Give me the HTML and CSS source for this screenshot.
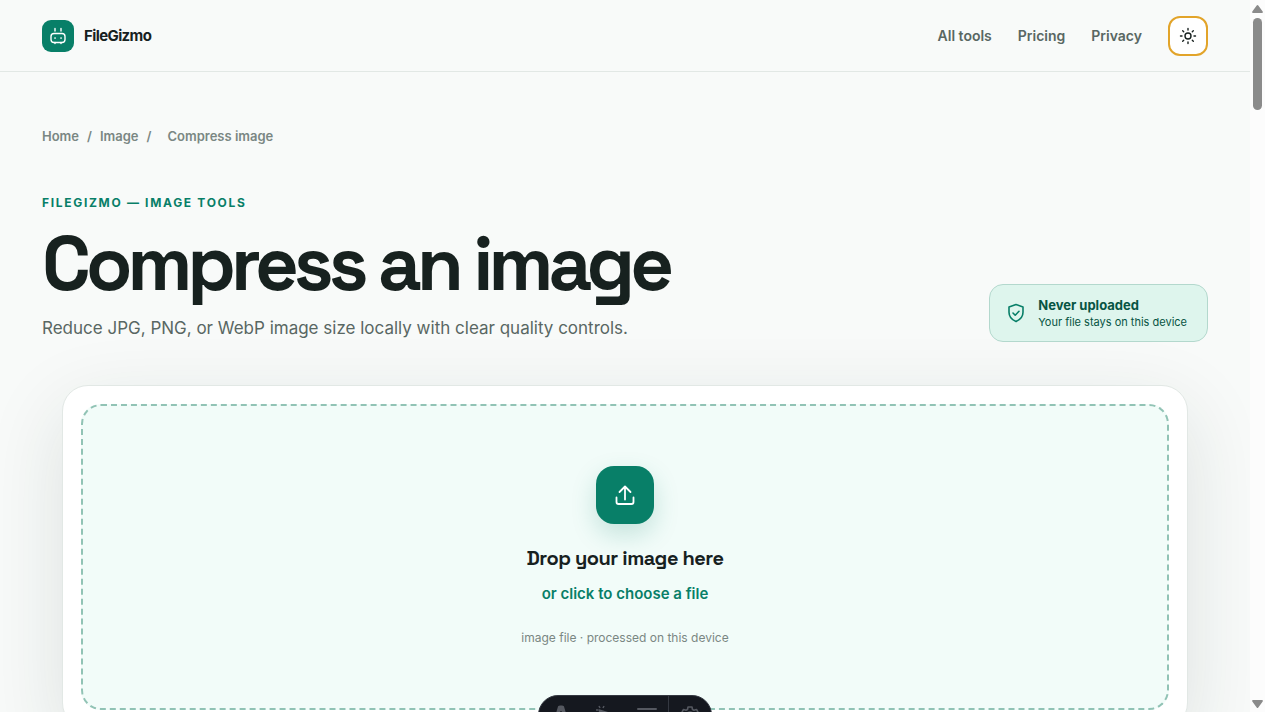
FILE: index.html
```
<!DOCTYPE html>
<html lang="en">
<head>
  <meta charset="utf-8">
  <meta name="viewport" content="width=device-width, initial-scale=1">
  <title>Compress an image - FileGizmo</title>
  <link rel="stylesheet" href="styles.css">
</head>
<body>
  <div class="page">
    <header class="site-header">
      <a class="brand" href="#">
        <span class="brand-mark">
          <svg width="20" height="20" viewBox="0 0 20 20" fill="none" stroke="currentColor" stroke-width="1.4" stroke-linecap="round">
            <path d="M7 2.500v2.500M13 2.500v2.500M7 16.500v1M13 16.500v1"/>
            <rect x="3" y="7.500" width="14" height="9" rx="3"/>
            <path stroke-width="1.700" d="M7 12h.1M13 12h.1"/>
          </svg>
        </span>
        FileGizmo
      </a>
      <nav class="main-nav">
        <a href="#">All tools</a>
        <a href="#">Pricing</a>
        <a href="#">Privacy</a>
        <button class="theme-button" type="button" aria-label="Switch theme">
          <svg width="18" height="18" viewBox="0 0 18 18" fill="none" stroke="currentColor" stroke-width="1.4" stroke-linecap="round">
            <circle cx="9" cy="9" r="3"/>
            <path d="M9 1.5v1.500M9 15v1.500M1.5 9h1.500M15 9h1.500M3.7 3.7l1 1M13.3 13.3l1 1M3.7 14.3l1-1M13.3 4.7l1-1"/>
          </svg>
        </button>
      </nav>
    </header>

    <main class="content">
      <nav class="breadcrumbs" aria-label="Breadcrumb">
        <a href="#">Home</a>
        <span>/</span>
        <a href="#">Image</a>
        <span>/</span>
        <span class="current">Compress image</span>
      </nav>

      <div class="intro">
        <div>
          <p class="eyebrow">FILEGIZMO — IMAGE TOOLS</p>
          <h1>Compress an image</h1>
          <p class="lead">Reduce JPG, PNG, or WebP image size locally with clear quality controls.</p>
        </div>
        <div class="privacy-note">
          <svg width="20" height="20" viewBox="0 0 20 20" fill="none" stroke="currentColor" stroke-width="1.6" stroke-linecap="round" stroke-linejoin="round">
            <path d="M10 1.500l7 2.600v5.200c0 4.400-2.800 7.500-7 9.200-4.200-1.700-7-4.800-7-9.200V4.100z"/>
            <path d="M7 10l2.200 2.200L13 8.300"/>
          </svg>
          <div>
            <strong>Never uploaded</strong>
            <span>Your file stays on this device</span>
          </div>
        </div>
      </div>

      <section class="panel">
        <button class="dropzone" type="button">
          <span class="upload-icon">
            <svg width="24" height="24" viewBox="0 0 24 24" fill="none" stroke="currentColor" stroke-width="1.8" stroke-linecap="round" stroke-linejoin="round">
              <path d="M12 16.500V3.500M6.500 9L12 3.500 17.500 9"/>
              <path d="M3.500 14.500V19a2 2 0 0 0 2 2h13a2 2 0 0 0 2-2v-4.500"/>
            </svg>
          </span>
          <span class="drop-title">Drop your image here</span>
          <span class="drop-action">or click to choose a file</span>
          <span class="drop-hint">image file · processed on this device</span>
        </button>
      </section>
    </main>

    <div class="dev-toolbar">
      <button type="button" aria-label="Menu">
        <svg width="20" height="20" viewBox="0 0 20 20" fill="currentColor"><path d="M7 1.500C7.500 .3 12.500 .3 13 1.500L17 15c-2-1-3-1.500-4-1.500L10.500 6h-1L7 13.500c-1 0-2 .5-4 1.500z"/></svg>
      </button>
      <button type="button" aria-label="Inspect">
        <svg width="20" height="20" viewBox="0 0 20 20" fill="none" stroke="currentColor" stroke-width="1.5" stroke-linejoin="round"><path d="M5 5l13 4-6 2-2 6zM2 5h2M5 1l1 2M10 1L9 3M1 9l3-1"/></svg>
      </button>
      <button type="button" aria-label="Audit">
        <svg width="20" height="20" viewBox="0 0 20 20" fill="none" stroke="currentColor" stroke-width="2" stroke-linecap="round"><path d="M1 4h18M1 10h18M1 16h18"/></svg>
      </button>
      <button class="settings" type="button" aria-label="Settings">
        <svg width="20" height="20" viewBox="0 0 20 20" fill="none" stroke="currentColor" stroke-width="1.6" stroke-linejoin="round"><path d="M8 2h4l.5 2.500 1.500.8L16.500 4.500l2 3.500-2 2 2 2-2 3.500-2.500-.8-1.500.8L12 18H8l-.5-2.500-1.500-.8-2.500.8-2-3.500 2-2-2-2 2-3.500 2.500.8 1.500-.8z"/><circle cx="10" cy="10" r="3"/></svg>
      </button>
    </div>
  </div>

  <div class="scrollbar" aria-hidden="true">
    <svg width="11" height="8" viewBox="0 0 11 8" fill="currentColor"><path d="M5.500 0q.5 0 .8.500L10.700 6.500q.6 1.500-.7 1.500H1Q-.3 8 .3 6.500L4.700.5Q5 0 5.500 0z"/></svg>
    <div class="track"><div class="thumb"></div></div>
    <svg width="11" height="8" viewBox="0 0 11 8" fill="currentColor"><path d="M5.500 8q.5 0 .8-.5L10.700 1.500Q11.300 0 10 0H1Q-.3 0 .3 1.500L4.700 7.500Q5 8 5.500 8z"/></svg>
  </div>
</body>
</html>
```
FILE: styles.css
```
* {
  box-sizing: border-box;
}

body {
  margin: 0;
  display: flex;
  height: 100vh;
  overflow: hidden;
  background: #f8faf9;
  color: #17211f;
  font-family: Inter, "Liberation Sans", sans-serif;
}

a {
  color: inherit;
  text-decoration: none;
}

button {
  font: inherit;
  cursor: pointer;
}

.page {
  position: relative;
  flex: 1;
  min-width: 0;
  overflow: hidden;
}

.site-header {
  display: flex;
  justify-content: space-between;
  align-items: center;
  height: 72px;
  padding: 0 42px;
  border-bottom: 1px solid #e2e8e5;
}

.brand {
  display: flex;
  align-items: center;
  gap: 10px;
  font-size: 15px;
  font-weight: 700;
  letter-spacing: -0.04em;
}

.brand-mark {
  display: flex;
  align-items: center;
  justify-content: center;
  width: 32px;
  height: 32px;
  border-radius: 9px;
  background: #087f68;
  color: #fff;
}

.main-nav {
  display: flex;
  align-items: center;
  gap: 26px;
  color: #596763;
  font-size: 14px;
  font-weight: 600;
}

.theme-button {
  display: flex;
  align-items: center;
  justify-content: center;
  width: 40px;
  height: 40px;
  padding: 0;
  border: 2px solid #e2a42a;
  border-radius: 12px;
  background: #fff;
  color: #17211f;
}

.content {
  padding: 54px 42px;
}

.breadcrumbs {
  display: flex;
  gap: 8px;
  color: #7a8783;
  font-size: 13px;
  font-weight: 600;
  line-height: 20px;
}

.current {
  margin-left: 8px;
}

.intro {
  display: flex;
  justify-content: space-between;
  align-items: flex-end;
  margin-top: 48px;
}

.eyebrow {
  margin: 0;
  color: #087f68;
  font-size: 12px;
  font-weight: 700;
  letter-spacing: 0.14em;
  line-height: 18px;
}

h1 {
  margin: 14px 0 12px;
  font-family: "Space Grotesk", Inter, sans-serif;
  font-size: 76px;
  font-weight: 700;
  letter-spacing: -0.065em;
  line-height: 76px;
}

.lead {
  margin: 0;
  color: #596763;
  font-size: 17px;
  line-height: 28px;
}

.privacy-note {
  display: flex;
  align-items: center;
  gap: 12px;
  height: 58px;
  padding: 0 20px 0 16px;
  border: 1px solid #b3d8cd;
  border-radius: 14px;
  background: #def5ed;
  color: #087f68;
}

.privacy-note strong,
.privacy-note span {
  display: block;
  color: #075443;
}

.privacy-note strong {
  font-size: 13px;
  line-height: 17px;
}

.privacy-note span {
  font-size: 11px;
  line-height: 16px;
}

.panel {
  margin: 43px 20px 0;
  padding: 18px;
  border: 1px solid #e2e8e5;
  border-radius: 26px;
  background: #fff;
  box-shadow: 0 24px 80px rgba(23, 49, 42, 0.12);
}

.dropzone {
  display: flex;
  flex-direction: column;
  align-items: center;
  width: 100%;
  padding: 60px 20px;
  border: 2px dashed #91c3b5;
  border-radius: 20px;
  background: #f2fcf9;
  color: #17211f;
}

.upload-icon {
  display: flex;
  align-items: center;
  justify-content: center;
  width: 58px;
  height: 58px;
  border-radius: 18px;
  background: #087f68;
  color: #fff;
  box-shadow: 0 10px 26px rgba(8, 127, 104, 0.2);
}

.drop-title {
  margin-top: 20px;
  font-family: "Space Grotesk", Inter, sans-serif;
  font-size: 20px;
  font-weight: 600;
  letter-spacing: -0.025em;
  line-height: 28px;
}

.drop-action {
  margin-top: 10px;
  color: #087f68;
  font-size: 15px;
  font-weight: 600;
  line-height: 24px;
}

.drop-hint {
  margin-top: 22px;
  color: #7a8783;
  font-size: 12px;
  line-height: 20px;
}

.dev-toolbar {
  position: absolute;
  bottom: -23px;
  left: 50%;
  display: flex;
  height: 40px;
  overflow: hidden;
  border: 1px solid #343841;
  border-radius: 20px;
  background: #15181f;
  transform: translateX(-50%);
}

.dev-toolbar button {
  display: flex;
  align-items: center;
  justify-content: center;
  width: 43px;
  padding: 0;
  border: 0;
  background: none;
  color: #555860;
}

.dev-toolbar .settings {
  border-left: 1px solid #343841;
}

.scrollbar {
  display: flex;
  flex-direction: column;
  align-items: center;
  width: 15px;
  padding: 5px 0 4px;
  background: #fcfcfc;
  color: #8b8b8b;
}

.track {
  flex: 1;
  padding-top: 5px;
}

.thumb {
  width: 9px;
  height: 92px;
  border-radius: 5px;
  background: #8b8b8b;
}
```
